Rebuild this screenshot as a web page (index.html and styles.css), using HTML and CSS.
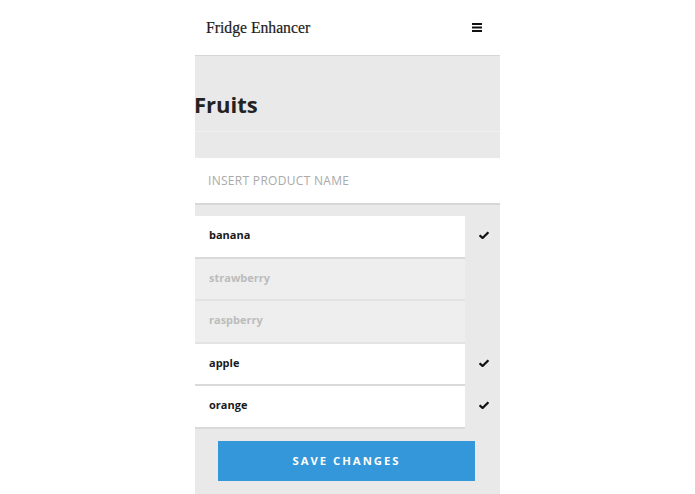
FILE: index.html
```html
<!DOCTYPE html>
<html lang="en">
<head>
  <meta charset="UTF-8">
  <meta name="viewport" content="width=device-width, initial-scale=1.0">
  <title>Fridge Enhancer</title>
  <link rel="stylesheet" href="styles.css">
</head>
<body>
  <div class="app">
    <header class="topbar">
      <span class="brand">Fridge Enhancer</span>
      <span class="menu">
        <svg width="10" height="9" viewBox="0 0 10 9"><rect x="0" y="0" width="10" height="2"/><rect x="0" y="3.5" width="10" height="2"/><rect x="0" y="7" width="10" height="2"/></svg>
      </span>
    </header>

    <main class="content">
      <div class="title-row">
        <h1>Fruits</h1>
      </div>

      <input class="product-input" type="text" placeholder="INSERT PRODUCT NAME">

      <ul class="items">
        <li class="item checked"><span class="name">banana</span><span class="tick"></span></li>
        <li class="item"><span class="name">strawberry</span><span class="tick"></span></li>
        <li class="item"><span class="name">raspberry</span><span class="tick"></span></li>
        <li class="item checked"><span class="name">apple</span><span class="tick"></span></li>
        <li class="item checked"><span class="name">orange</span><span class="tick"></span></li>
      </ul>

      <button class="save">SAVE CHANGES</button>
    </main>
  </div>

  <script>
    document.querySelectorAll('.item.checked .tick').forEach(t => {
      t.innerHTML = '<svg width="10" height="8" viewBox="0 0 10 8"><path d="M0.6 4.2 L3.6 7 L9.4 1.2" fill="none" stroke="#111" stroke-width="2.2"/></svg>';
    });
  </script>
</body>
</html>
```

FILE: styles.css
```css
body {
  margin: 0;
  background-color: #fff;
  font-family: "Open Sans", Arial, sans-serif;
}
.app {
  width: 305px;
  margin: 0 auto;
  min-height: 494px;
  background-color: #e9e9e9;
}
.topbar {
  height: 56px;
  background-color: #fff;
  border-bottom: 1px solid #d6d6d6;
  display: flex;
  align-items: center;
  justify-content: space-between;
  padding: 0 18px 0 11px;
  box-sizing: border-box;
}
.brand {
  font-family: "Liberation Serif", "DejaVu Serif", serif;
  font-size: 15.7px;
  color: #1c1c1c;
  -webkit-text-stroke: 0.2px #1c1c1c;
}
.menu svg { display: block; fill: #111; }
.content {
  padding-bottom: 13px;
}
.title-row {
  height: 75px;
  border-bottom: 1px solid #f1f1f1;
  display: flex;
  align-items: center;
}
.title-row h1 {
  margin: 0 0 0 -1px;
  font-size: 22px;
  font-weight: 700;
  color: #222;
  padding-top: 21px;
}
.product-input {
  display: block;
  width: 100%;
  box-sizing: border-box;
  height: 47px;
  margin-top: 26px;
  border: none;
  border-bottom: 2px solid #d7d7d7;
  background: #fff;
  padding: 0 13px;
  font-family: "Open Sans", Arial, sans-serif;
  font-size: 12px;
  letter-spacing: 0.3px;
  outline: none;
}
.product-input::placeholder { color: #aaa; }
.items {
  list-style: none;
  margin: 11px 0 0;
  padding: 0;
}
.item {
  display: flex;
  height: 42.5px;
}
.item .name {
  width: 270px;
  box-sizing: border-box;
  background-color: #eeeeee;
  border-bottom: 2px solid #e3e3e3;
  padding: 0 14px 3px;
  display: flex;
  align-items: center;
  font-size: 11px;
  font-weight: 700;
  color: #bcbcbc;
}
.item.checked .name {
  background-color: #fff;
  color: #1a1a1a;
  border-bottom-color: #dadada;
}
.item .tick {
  flex: 1;
  display: flex;
  align-items: center;
  justify-content: center;
  padding-bottom: 4px;
  padding-left: 3px;
}
.item .tick svg { display: block; }
.save {
  display: block;
  width: 257px;
  height: 40px;
  margin: 12px 0 0 23px;
  border: none;
  background-color: #3497da;
  color: #fff;
  font-family: "Open Sans", Arial, sans-serif;
  font-size: 11.3px;
  font-weight: 700;
  letter-spacing: 2px;
  cursor: pointer;
}
```
